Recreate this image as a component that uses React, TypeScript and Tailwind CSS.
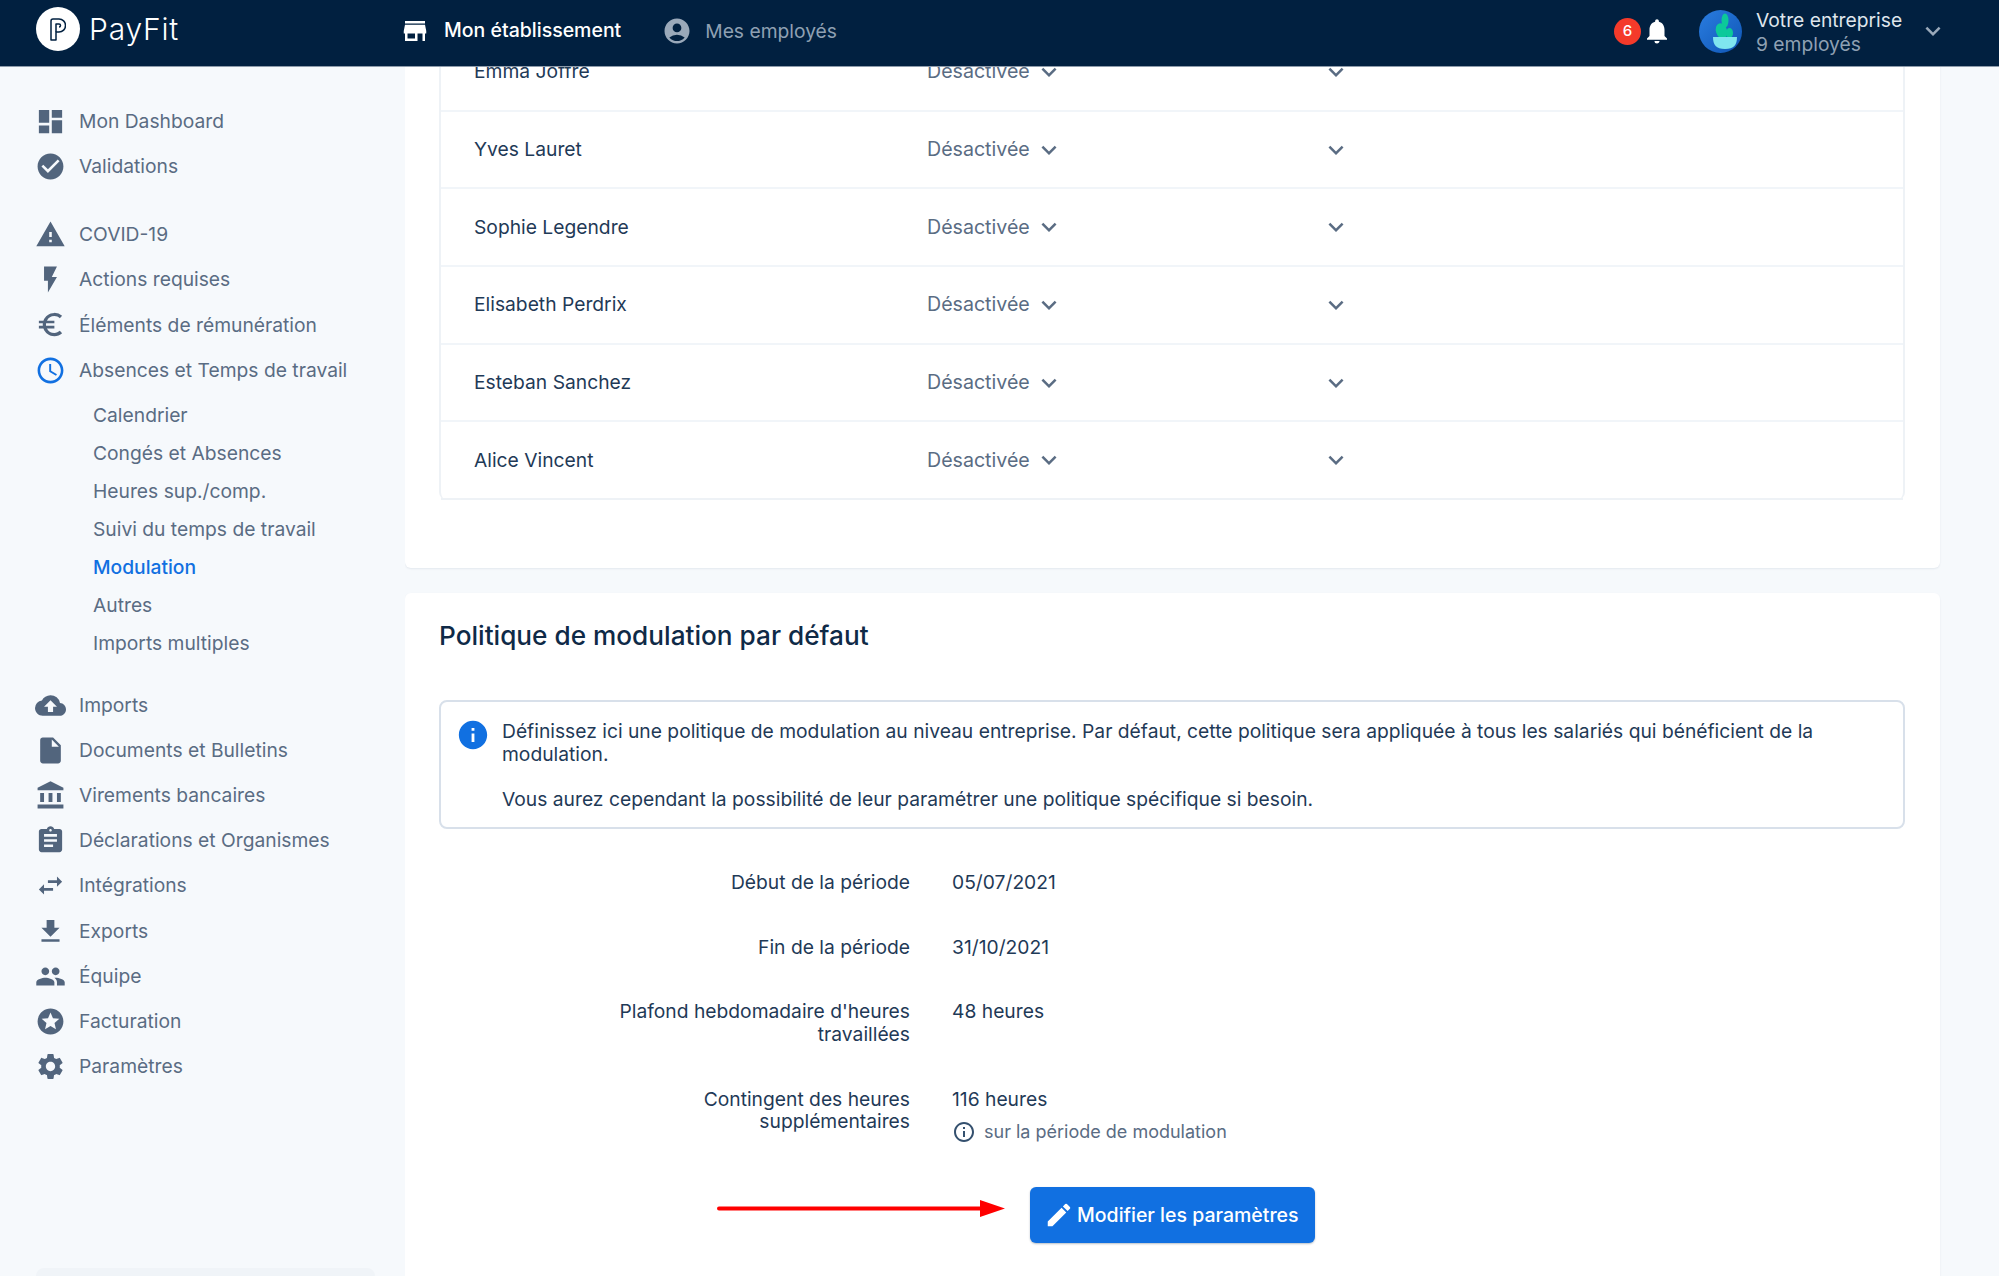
import React from "react";
import {
  MdDashboard, MdCheckCircle, MdWarning, MdFlashOn, MdEuroSymbol, MdAccessTime, MdCloudUpload,
  MdInsertDriveFile, MdAccountBalance, MdAssignment, MdSwapHoriz, MdFileDownload, MdPeople, MdStars,
  MdSettings, MdStore, MdAccountCircle, MdNotifications, MdEdit, MdInfo, MdInfoOutline, MdKeyboardArrowDown,
} from "react-icons/md";

type IconT = React.ComponentType<{ className?: string }>;

function NavItem({ icon: Icon, label, active }: { icon: IconT; label: string; active?: boolean }) {
  return (
    <div className="flex h-[45.2px] shrink-0 items-center pl-[35px]">
      <Icon className={`h-[31px] w-[31px] shrink-0 ${active ? "text-[#1170e1]" : "text-[#52657d]"}`} />
      <span className="ml-[13px] text-[19.25px] text-[#5a6c83]">{label}</span>
    </div>
  );
}

function SubItem({ label, active }: { label: string; active?: boolean }) {
  return (
    <div className={`flex h-[38.1px] shrink-0 items-center pl-[93px] text-[19.25px] ${active ? "font-medium text-[#1170e1]" : "text-[#5a6c83]"}`}>
      {label}
    </div>
  );
}

function Row({ name, last }: { name: string; last?: boolean }) {
  return (
    <div className={`flex h-[77.7px] items-center pl-[33px] border-b-2 ${last ? "border-[#eef2f6]" : "border-[#f1f5f9]"}`}>
      <span className="w-[453px] text-[19.25px] text-[#1f3a57]">{name}</span>
      <span className="w-[107px] text-[19.6px] text-[#5a6c83]">Désactivée</span>
      <MdKeyboardArrowDown className="h-[30px] w-[30px] text-[#5a6c83]" />
      <MdKeyboardArrowDown className="ml-[257px] h-[30px] w-[30px] text-[#5a6c83]" />
    </div>
  );
}

function FormRow({ label, children }: { label: React.ReactNode; children: React.ReactNode }) {
  return (
    <>
      <div className="pl-[170px] text-right text-[19.25px] leading-[22.7px] text-[#1f3a57]">{label}</div>
      <div className="text-[19.25px] leading-[22.7px] text-[#1f3a57]">{children}</div>
    </>
  );
}

export default function App() {
  return (
    <div className="flex h-[1276px] w-[1999px] flex-col overflow-hidden bg-[#f6f9fc] font-[Inter,sans-serif]">
      <header className="flex h-[67px] shrink-0 items-center border-b border-[#8d9bab] bg-[#012040] pb-[4px]">
        <div className="ml-[36px] mb-[4px] flex h-[44px] w-[44px] items-center justify-center rounded-full bg-white">
          <svg viewBox="0 0 16 23" className="h-[23px] w-[16px]" fill="none" stroke="#012040" strokeWidth="1.500" strokeLinejoin="round">
            <path d="M1 22V3a2 2 0 0 1 2-2h6a6.500 6.500 0 0 1 0 13H6v8z" />
            <path d="M6 14V6h3a1.500 1.500 0 0 1 0 3" />
          </svg>
        </div>
        <span className="ml-[9px] mb-[3px] w-[101px] text-[30px] font-light tracking-[0.8px] text-white">PayFit</span>
        <div className="ml-[210px] flex items-center">
          <MdStore className="h-[30px] w-[30px] text-white" />
          <span className="ml-[14px] text-[19.5px] font-medium text-white">Mon établissement</span>
        </div>
        <div className="ml-[41px] flex items-center">
          <MdAccountCircle className="h-[30px] w-[30px] text-[#9aa9ba]" />
          <span className="ml-[13px] text-[19.25px] text-[#8fa0b3]">Mes employés</span>
        </div>
        <div className="ml-auto flex h-[27px] w-[27px] items-center justify-center rounded-full bg-[#f43a2a] text-[15px] font-medium text-white">6</div>
        <MdNotifications className="ml-[1px] h-[30px] w-[30px] text-white" />
        <div className="ml-[27px] h-[43px] w-[43px] shrink-0">
          <svg viewBox="0 0 43 43" className="h-[43px] w-[43px]">
            <defs>
              <linearGradient id="av" x1="0" y1="0" x2="1" y2="1">
                <stop offset="0" stopColor="#2a7de0" />
                <stop offset="1" stopColor="#0f55b5" />
              </linearGradient>
            </defs>
            <circle cx="21.500" cy="21.500" r="21.500" fill="url(#av)" />
            <ellipse cx="26" cy="10.500" rx="3.500" ry="7" fill="#0cc99a" />
            <ellipse cx="22.500" cy="21" rx="5.500" ry="8" fill="#0cc99a" transform="rotate(-18 22.500 21)" />
            <ellipse cx="30.500" cy="23" rx="3.500" ry="5" fill="#0cc99a" />
            <path d="M14 27h24c0 8-3 12-12 12s-12-4-12-12z" fill="#7fe5ef" />
          </svg>
        </div>
        <div className="ml-[14px] mt-[2px] flex w-[162px] flex-col">
          <span className="text-[19.25px] leading-[24px] text-[#dfe5ec]">Votre entreprise</span>
          <span className="text-[19.25px] leading-[24px] text-[#8fa0b3]">9 employés</span>
        </div>
        <MdKeyboardArrowDown className="mr-[51px] h-[30px] w-[30px] text-[#9aa9ba]" />
      </header>

      <div className="flex min-h-0 flex-1">
        <aside className="relative flex w-[405px] shrink-0 flex-col pt-[32px]">
          <NavItem icon={MdDashboard} label="Mon Dashboard" />
          <NavItem icon={MdCheckCircle} label="Validations" />
          <div className="h-[22.6px] shrink-0" />
          <NavItem icon={MdWarning} label="COVID-19" />
          <NavItem icon={MdFlashOn} label="Actions requises" />
          <NavItem icon={MdEuroSymbol} label="Éléments de rémunération" />
          <NavItem icon={MdAccessTime} label="Absences et Temps de travail" active />
          <div className="h-[3.2px] shrink-0" />
          <SubItem label="Calendrier" />
          <SubItem label="Congés et Absences" />
          <SubItem label="Heures sup./comp." />
          <SubItem label="Suivi du temps de travail" />
          <SubItem label="Modulation" active />
          <SubItem label="Autres" />
          <SubItem label="Imports multiples" />
          <div className="h-[20px] shrink-0" />
          <NavItem icon={MdCloudUpload} label="Imports" />
          <NavItem icon={MdInsertDriveFile} label="Documents et Bulletins" />
          <NavItem icon={MdAccountBalance} label="Virements bancaires" />
          <NavItem icon={MdAssignment} label="Déclarations et Organismes" />
          <NavItem icon={MdSwapHoriz} label="Intégrations" />
          <NavItem icon={MdFileDownload} label="Exports" />
          <NavItem icon={MdPeople} label="Équipe" />
          <NavItem icon={MdStars} label="Facturation" />
          <NavItem icon={MdSettings} label="Paramètres" />
          <div className="ml-[36px] mr-[30px] mt-[179px] h-[8px] shrink-0 rounded-t-[8px] bg-[#f0f4f8]" />
        </aside>

        <main className="min-w-0 flex-1 overflow-hidden pr-[59px]">
          <div className="-mt-[33px] rounded-b-[6px] bg-white pb-[68px] pl-[34px] pr-[35px] shadow-[0_1px_2px_rgba(15,42,71,0.08)]">
            <div className="rounded-b-[8px] border-x-2 border-[#eef2f6]">
              <Row name="Emma Joffre" />
              <Row name="Yves Lauret" />
              <Row name="Sophie Legendre" />
              <Row name="Elisabeth Perdrix" />
              <Row name="Esteban Sanchez" />
              <Row name="Alice Vincent" last />
            </div>
          </div>

          <section className="mt-[25px] rounded-t-[6px] bg-white pb-[120px] pl-[34px] pr-[35px] pt-[26px] shadow-[0_1px_2px_rgba(15,42,71,0.08)]">
            <h2 className="text-[26.2px] font-medium leading-[34px] text-[#0f2a47]">Politique de modulation par défaut</h2>
            <div className="mt-[47px] flex rounded-[8px] border-2 border-[#d8e0ea] pb-[16px] pl-[15px] pr-[60px] pt-[18px]">
              <MdInfo className="mt-[-2px] h-[34px] w-[34px] shrink-0 text-[#1170e1]" />
              <div className="ml-[12px] text-[19.25px] leading-[22.7px] text-[#1f3a57]">
                <p>Définissez ici une politique de modulation au niveau entreprise. Par défaut, cette politique sera appliquée à tous les salariés qui bénéficient de la modulation.</p>
                <p className="mt-[22.7px]">Vous aurez cependant la possibilité de leur paramétrer une politique spécifique si besoin.</p>
              </div>
            </div>

            <div className="mt-[42px] grid grid-cols-[471px_1fr] gap-x-[42px] gap-y-[42px]">
              <FormRow label="Début de la période">05/07/2021</FormRow>
              <FormRow label="Fin de la période">31/10/2021</FormRow>
              <FormRow label="Plafond hebdomadaire d'heures travaillées">48 heures</FormRow>
              <FormRow label="Contingent des heures supplémentaires">
                <div>116 heures</div>
                <div className="mt-[10px] flex items-center text-[18px] leading-[22px] text-[#5a6c83]">
                  <MdInfoOutline className="h-[24px] w-[24px] text-[#34506e]" />
                  <span className="ml-[8px]">sur la période de modulation</span>
                </div>
              </FormRow>
            </div>

            <div className="mt-[43px] pl-[591px]">
              <div className="relative inline-flex">
                <svg viewBox="0 0 288 17" className="absolute left-[-313px] top-[13px] h-[17px] w-[288px]">
                  <rect x="0" y="6.500" width="265" height="4" rx="2" fill="#ff0000" />
                  <path d="M263 0L288 8.500L263 17z" fill="#ff0000" />
                </svg>
                <button className="flex h-[56px] w-[285px] items-center rounded-[6px] bg-[#1170e1] pl-[14px] text-[19.5px] font-medium text-white shadow-[0_1px_2px_rgba(15,42,71,0.3)]">
                  <MdEdit className="h-[30px] w-[30px] text-white" />
                  <span className="ml-[3px]">Modifier les paramètres</span>
                </button>
              </div>
            </div>
          </section>
        </main>
      </div>
    </div>
  );
}
